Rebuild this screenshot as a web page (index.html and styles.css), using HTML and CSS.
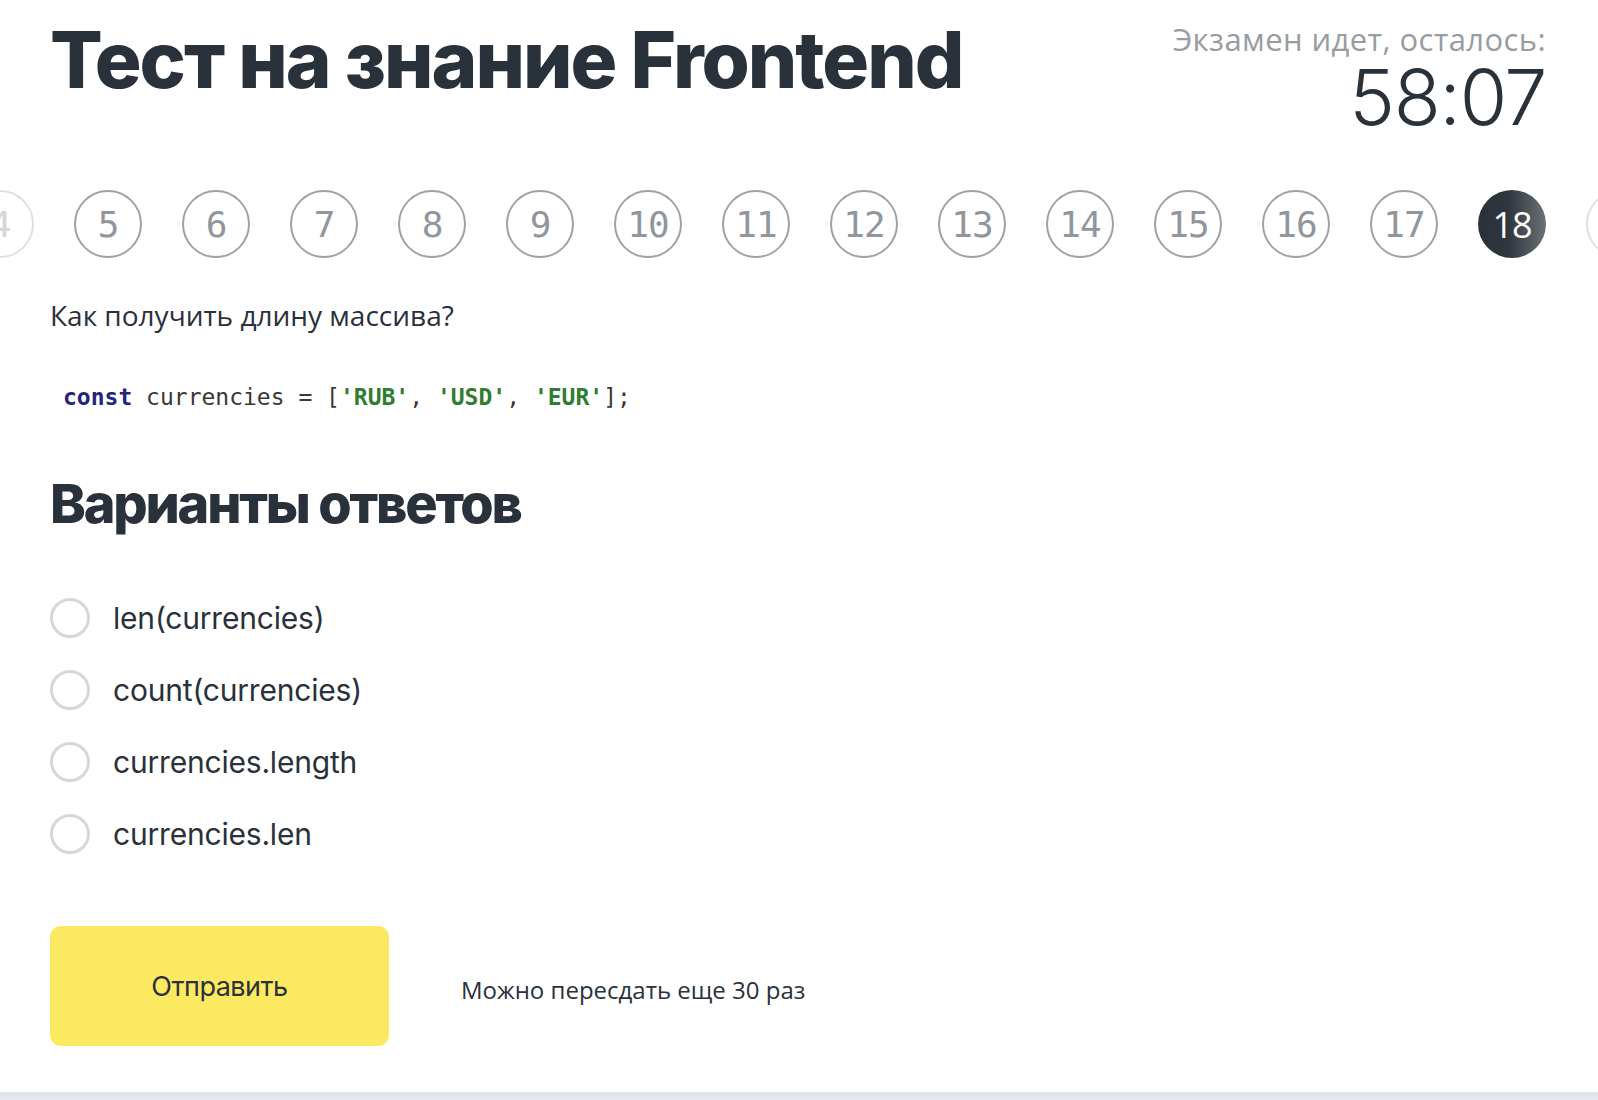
FILE: index.html
```html
<!DOCTYPE html>
<html lang="ru">
<head>
<meta charset="utf-8">
<title>Тест на знание Frontend</title>
<link rel="stylesheet" href="styles.css">
</head>
<body>
<main class="page">
  <header class="header">
    <h1 class="title">Тест на знание Frontend</h1>
    <div class="timer">
      <div class="timer-label">Экзамен идет, осталось:</div>
      <div class="timer-value">58:07</div>
    </div>
  </header>

  <nav class="steps">
    <div class="steps-track">
      <span class="step step-faded">4</span>
      <span class="step">5</span>
      <span class="step">6</span>
      <span class="step">7</span>
      <span class="step">8</span>
      <span class="step">9</span>
      <span class="step">10</span>
      <span class="step">11</span>
      <span class="step">12</span>
      <span class="step">13</span>
      <span class="step">14</span>
      <span class="step">15</span>
      <span class="step">16</span>
      <span class="step">17</span>
      <span class="step step-active">18</span>
      <span class="step step-faded">19</span>
    </div>
  </nav>

  <section class="question">
    <p class="question-text">Как получить длину массива?</p>
    <pre class="code"><span class="kw">const</span> currencies = [<span class="str">'RUB'</span>, <span class="str">'USD'</span>, <span class="str">'EUR'</span>];</pre>
  </section>

  <section class="answers">
    <h2 class="answers-title">Варианты ответов</h2>
    <ul class="options">
      <li class="option"><span class="radio"></span><span class="option-text">len(currencies)</span></li>
      <li class="option"><span class="radio"></span><span class="option-text">count(currencies)</span></li>
      <li class="option"><span class="radio"></span><span class="option-text">currencies.length</span></li>
      <li class="option"><span class="radio"></span><span class="option-text">currencies.len</span></li>
    </ul>
  </section>

  <div class="actions">
    <button class="submit" type="button">Отправить</button>
    <span class="retake">Можно пересдать еще 30 раз</span>
  </div>
</main>
<div class="bottom-band"></div>
</body>
</html>
```

FILE: styles.css
```css
* { box-sizing: border-box; }

html, body {
  margin: 0;
  padding: 0;
  background: #ffffff;
  color: #29313a;
}

body {
  width: 1598px;
  height: 1100px;
  overflow: hidden;
  display: flex;
  flex-direction: column;
}

.page {
  flex: 1;
  padding: 0 52px 0 50px;
}

.header {
  display: flex;
  justify-content: space-between;
  align-items: flex-start;
  height: 188px;
}

.title {
  margin: 12px 0 0;
  font-family: "Inter", sans-serif;
  font-weight: 800;
  font-size: 78px;
  line-height: 96px;
  letter-spacing: -2px;
  color: #29313a;
}

.timer {
  text-align: right;
  padding-top: 19px;
}

.timer-label {
  font-family: "Open Sans", sans-serif;
  font-size: 31px;
  line-height: 40px;
  letter-spacing: 0.4px;
  color: #979ca1;
}

.timer-value {
  margin-top: -1px;
  font-family: "Inter", sans-serif;
  font-weight: 300;
  font-size: 77px;
  line-height: 78px;
  letter-spacing: -1.4px;
  color: #29313a;
}

.steps {
  margin: 0 -52px 0 -50px;
  overflow: hidden;
}

.steps-track {
  display: flex;
  gap: 40px;
  margin-left: -34px;
  padding-top: 2px;
}

.step {
  flex: none;
  width: 68px;
  height: 68px;
  border: 2px solid #9ea3a7;
  border-radius: 50%;
  display: flex;
  align-items: center;
  justify-content: center;
  font-family: "DejaVu Sans Mono", monospace;
  font-size: 36px;
  color: #90969b;
  letter-spacing: -1px;
}

.step-faded {
  border-color: #dfe0e1;
  color: #d4d6d8;
}

.step-active {
  border: none;
  background: linear-gradient(90deg, #29313a 0%, #2f363e 45%, #6c7176 100%);
  color: #ffffff;
  font-family: "Open Sans", sans-serif;
  font-size: 36px;
}

.question {
  padding-top: 38px;
}

.question-text {
  margin: 0;
  font-family: "Open Sans", sans-serif;
  font-size: 28px;
  line-height: 38px;
  color: #29313a;
}

.code {
  margin: 48px 0 0 13px;
  font-family: "DejaVu Sans Mono", monospace;
  font-size: 23px;
  line-height: 30px;
  color: #3b3835;
}

.kw { color: #25257a; font-weight: bold; }
.str { color: #2f7d2f; font-weight: bold; }

.answers {
  padding-top: 60px;
}

.answers-title {
  margin: 0;
  font-family: "Inter", sans-serif;
  font-weight: 800;
  font-size: 54px;
  line-height: 64px;
  letter-spacing: -2.2px;
  color: #29313a;
}

.options {
  list-style: none;
  margin: 62px 0 0;
  padding: 0;
  display: flex;
  flex-direction: column;
  gap: 32px;
}

.option {
  display: flex;
  align-items: center;
  gap: 23px;
  height: 40px;
}

.radio {
  flex: none;
  width: 40px;
  height: 40px;
  border: 3px solid #d7d7d8;
  border-radius: 50%;
}

.option-text {
  font-family: "Inter", sans-serif;
  font-size: 30px;
  letter-spacing: -0.2px;
  color: #29313a;
}

.actions {
  margin-top: 72px;
  display: flex;
  align-items: center;
  gap: 72px;
}

.submit {
  width: 339px;
  height: 120px;
  border: none;
  border-radius: 11px;
  background: #fce962;
  font-family: "Inter", sans-serif;
  font-size: 27px;
  color: #29313a;
  letter-spacing: -0.5px;
  padding: 0;
  cursor: pointer;
}

.retake {
  font-family: "Open Sans", sans-serif;
  font-size: 24px;
  color: #29313a;
  padding-top: 6px;
}

.bottom-band {
  flex: none;
  height: 8px;
  background: linear-gradient(180deg, #dfe2ec 0%, #e8eaf1 100%);
}
```
